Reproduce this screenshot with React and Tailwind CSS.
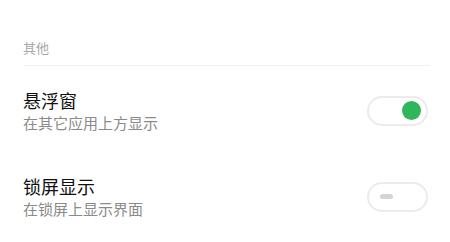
const Toggle = ({ on }) => {
  return (
    <div className="w-[61px] h-[30px] rounded-full border-2 border-[#ebebeb] bg-white flex items-center px-[5px]">
      {on ? (
        <span className="ml-auto w-[19px] h-[19px] rounded-full bg-[#2fb55a]"></span>
      ) : (
        <span className="ml-[6px] w-[13px] h-[5px] rounded-full bg-[#d4d4d4]"></span>
      )}
    </div>
  );
};

const Row = ({ title, desc, on, className }) => {
  return (
    <div className={"flex items-center justify-between " + className}>
      <div className="flex flex-col">
        <p className="text-[18px] leading-[24px] text-[#111]">{title}</p>
        <p className="text-[15px] leading-[20px] text-[#8a8a8a] mt-[1px]">{desc}</p>
      </div>
      <div className="mr-[2px]">
        <Toggle on={on} />
      </div>
    </div>
  );
};

const App = () => {
  return (
    <div
      className="w-[450px] h-[242px] bg-white pl-[23px] pr-[20px] pt-[38px] overflow-hidden"
      style={{ fontFamily: '"Noto Sans CJK SC", "Noto Sans", sans-serif' }}
    >
      <p className="text-[13px] leading-[20px] text-[#a8a8a8]">其他</p>
      <div className="mt-[7px] h-[1px] bg-[#f1f1f1]"></div>
      <Row title="悬浮窗" desc="在其它应用上方显示" on={true} className="mt-[22px]" />
      <Row title="锁屏显示" desc="在锁屏上显示界面" on={false} className="mt-[41px]" />
    </div>
  );
};

export default App;
